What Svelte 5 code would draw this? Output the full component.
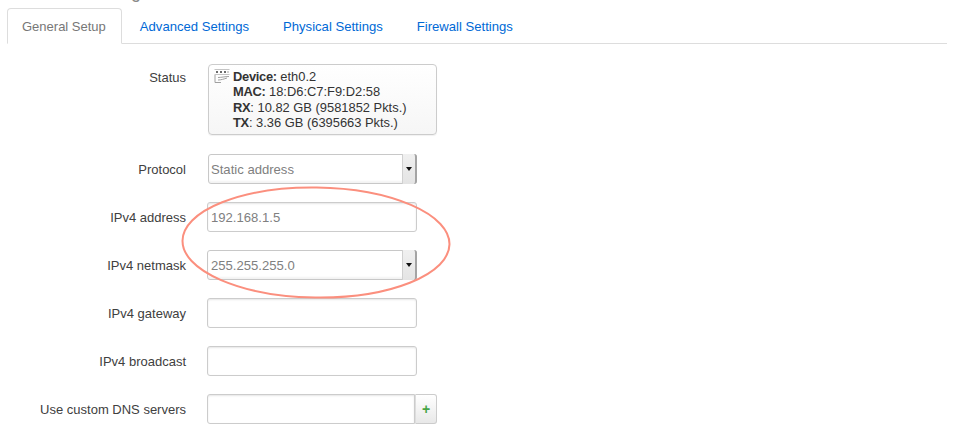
<script lang="ts">
  const tabs = ['General Setup', 'Advanced Settings', 'Physical Settings', 'Firewall Settings'];
</script>

<div class="page">
  <div class="cut-heading"><span>Common Configuration</span></div>

  <ul class="tabs">
    {#each tabs as t, i}
      <li class:active={i === 0}>{t}</li>
    {/each}
  </ul>

  <div class="form">
    <div class="row status-row">
      <span class="label">Status</span>
      <div class="status">
        <svg class="ifc" width="16" height="15" viewBox="0 0 16 15" aria-hidden="true">
          <path d="M0.5 0.500h15M0.500 5.500h15" stroke="#c4c4c4" fill="none" />
          <path d="M2 2h2v2H2zM6 2h2v2H6zM10 2h2v2h-2z" fill="#6c6c6c" />
          <path d="M1 6v7.500h6M4 8.500c3 0 7-1 11-1M4 11c3 0 6-1 9-2" stroke="#a0a0a0" fill="none" />
          <path d="M13 2h2v2h-2z" fill="#d0d0d0" />
        </svg>
        <div class="lines">
          <div><b>Device:</b> eth0.2</div>
          <div><b>MAC:</b> 18:D6:C7:F9:D2:58</div>
          <div><b>RX</b>: 10.82 GB (9581852 Pkts.)</div>
          <div><b>TX</b>: 3.36 GB (6395663 Pkts.)</div>
        </div>
      </div>
    </div>

    <div class="row">
      <span class="label">Protocol</span>
      <div class="select first">
        <span class="val">Static address</span>
        <span class="arrow"><i></i></span>
      </div>
    </div>

    <div class="row">
      <span class="label">IPv4 address</span>
      <div class="input"><span class="val">192.168.1.5</span></div>
    </div>

    <div class="row">
      <span class="label">IPv4 netmask</span>
      <div class="select">
        <span class="val">255.255.255.0</span>
        <span class="arrow"><i></i></span>
      </div>
    </div>

    <div class="row">
      <span class="label">IPv4 gateway</span>
      <div class="input"></div>
    </div>

    <div class="row">
      <span class="label">IPv4 broadcast</span>
      <div class="input"></div>
    </div>

    <div class="row">
      <span class="label">Use custom DNS servers</span>
      <div class="input joined"></div>
      <div class="add">+</div>
    </div>
  </div>

  <svg class="circle" width="974" height="436" viewBox="0 0 974 436" aria-hidden="true">
    <ellipse cx="316" cy="242.500" rx="133.500" ry="55" transform="rotate(0.8 316 242.500)" fill="none" stroke="#fb8f7e" stroke-width="2" />
  </svg>
</div>

<style>
  :global(body) {
    background: #fff;
    font-family: "Liberation Sans", Arial, sans-serif;
    font-size: 13px;
    color: #404040;
    overflow: hidden;
  }
  .page { position: relative; width: 974px; height: 436px; overflow: hidden; }

  .cut-heading { height: 8px; overflow: hidden; padding-left: 11px; }
  .cut-heading span {
    display: block;
    margin-top: -19px;
    font-size: 18px;
    line-height: 22px;
    color: #8a8a8a;
  }

  .tabs {
    display: flex;
    list-style: none;
    margin: 0 27px 0 7px;
    padding: 0;
    height: 36px;
    border-bottom: 1px solid #ddd;
    box-sizing: border-box;
  }
  .tabs li {
    padding: 0 17px;
    line-height: 37px;
    font-size: 13.100px;
    color: #0069d6;
  }
  .tabs li:nth-child(2) { margin-left: 1px; }
  .tabs li.active {
    padding: 0 15px 0 14px;
    height: 36px;
    box-sizing: border-box;
    line-height: 36px;
    font-size: 13px;
    color: #777;
    background: #fff;
    border: 1px solid #ddd;
    border-bottom-color: #fff;
    border-radius: 4px 4px 0 0;
  }

  .form { padding-top: 20px; }
  .row { display: flex; height: 30px; margin-bottom: 18px; }
  .status-row { height: 71px; margin-bottom: 19px; }
  .label {
    width: 186px;
    margin-right: 21px;
    text-align: right;
    line-height: 31px;
    color: #404040;
    flex: none;
    white-space: nowrap;
  }
  .status-row .label { line-height: 28px; }

  .status {
    display: flex;
    width: 229px;
    height: 71px;
    margin-left: 1px;
    padding: 4px 5px;
    box-sizing: border-box;
    border: 1px solid #ccc;
    border-radius: 4px;
    background: linear-gradient(#fff, #f6f6f6);
    box-shadow: 0 1px 1px rgba(0, 0, 0, 0.06);
    font-size: 12.900px;
    line-height: 15.400px;
    color: #333;
  }
  .ifc { margin: 0 3px 0 0; flex: none; }
  .status b { font-weight: bold; letter-spacing: -0.3px; }

  .input, .select {
    width: 210px;
    height: 30px;
    box-sizing: border-box;
    border: 1px solid #ccc;
    border-radius: 3px;
    background: #fff;
    box-shadow: inset 0 1px 2px rgba(0, 0, 0, 0.1);
    line-height: 29px;
    padding-left: 3px;
    color: #808080;
    font-size: 13.100px;
  }
  .select {
    position: relative;
    box-shadow: inset 0 -2px 2px rgba(0, 0, 0, 0.05);
    border-color: #c8c8c8;
  }
  .select.first { margin-left: 1px; width: 209px; padding-left: 2px; }
  .arrow {
    position: absolute;
    top: -1px;
    right: -1px;
    bottom: -1px;
    width: 15px;
    display: flex;
    align-items: center;
    justify-content: center;
    box-sizing: border-box;
    background: linear-gradient(#f0f0f0, #e4e4e4);
    border-left: 1px solid #d0d0d0;
    border-right: 2px solid #a4a4a4;
    border-radius: 0 3px 3px 0;
  }
  .arrow i {
    width: 0;
    height: 0;
    border-left: 3.500px solid transparent;
    border-right: 3.500px solid transparent;
    border-top: 4px solid #111;
  }

  .input.joined { border-radius: 3px 0 0 3px; width: 208px; }
  .add {
    width: 22px;
    height: 30px;
    box-sizing: border-box;
    border: 1px solid #ccc;
    border-left: 1px solid #ddd;
    border-radius: 0 3px 3px 0;
    background: linear-gradient(#fff, #e8e8e8);
    color: #46a546;
    font-weight: bold;
    font-size: 14px;
    line-height: 28px;
    text-align: center;
  }

  .circle { position: absolute; left: 0; top: 0; pointer-events: none; }
</style>
